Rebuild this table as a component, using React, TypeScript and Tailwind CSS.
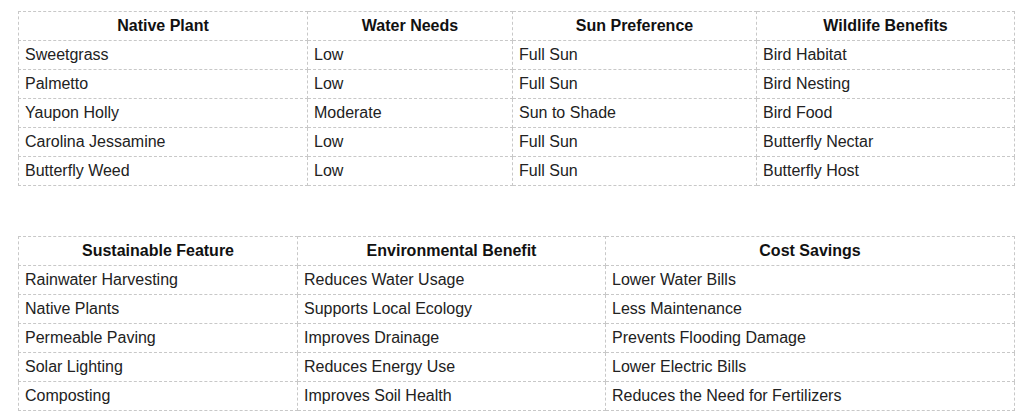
import React from "react";

const t1 = {
  head: ["Native Plant", "Water Needs", "Sun Preference", "Wildlife Benefits"],
  widths: ["w-[289px]", "w-[205px]", "w-[244px]", "w-[258px]"],
  rows: [
    ["Sweetgrass", "Low", "Full Sun", "Bird Habitat"],
    ["Palmetto", "Low", "Full Sun", "Bird Nesting"],
    ["Yaupon Holly", "Moderate", "Sun to Shade", "Bird Food"],
    ["Carolina Jessamine", "Low", "Full Sun", "Butterfly Nectar"],
    ["Butterfly Weed", "Low", "Full Sun", "Butterfly Host"],
  ],
};

const t2 = {
  head: ["Sustainable Feature", "Environmental Benefit", "Cost Savings"],
  widths: ["w-[279px]", "w-[308px]", "w-[409px]"],
  rows: [
    ["Rainwater Harvesting", "Reduces Water Usage", "Lower Water Bills"],
    ["Native Plants", "Supports Local Ecology", "Less Maintenance"],
    ["Permeable Paving", "Improves Drainage", "Prevents Flooding Damage"],
    ["Solar Lighting", "Reduces Energy Use", "Lower Electric Bills"],
    ["Composting", "Improves Soil Health", "Reduces the Need for Fertilizers"],
  ],
};

function Table({ data }: { data: { head: string[]; widths: string[]; rows: string[][] } }) {
  return (
    <table className="w-[997px] border-collapse table-fixed text-[16px] leading-[18px] text-[#222]">
      <colgroup>
        {data.widths.map((w, i) => (
          <col key={i} className={w} />
        ))}
      </colgroup>
      <thead>
        <tr>
          {data.head.map((h, i) => (
            <th
              key={i}
              className="border border-dashed border-[#c8c8c8] px-[6px] py-[5px] text-center font-bold text-[#111]"
            >
              {h}
            </th>
          ))}
        </tr>
      </thead>
      <tbody>
        {data.rows.map((r, ri) => (
          <tr key={ri}>
            {r.map((c, ci) => (
              <td
                key={ci}
                className="border border-dashed border-[#c8c8c8] px-[6px] py-[5px] text-left"
              >
                {c}
              </td>
            ))}
          </tr>
        ))}
      </tbody>
    </table>
  );
}

export default function App() {
  return (
    <div
      className="bg-white w-[1025px] h-[420px] overflow-hidden pl-[18px] pt-[11px] flex flex-col gap-[50px]"
      style={{ fontFamily: '"Liberation Sans", Arial, sans-serif' }}
    >
      <Table data={t1} />
      <Table data={t2} />
    </div>
  );
}
